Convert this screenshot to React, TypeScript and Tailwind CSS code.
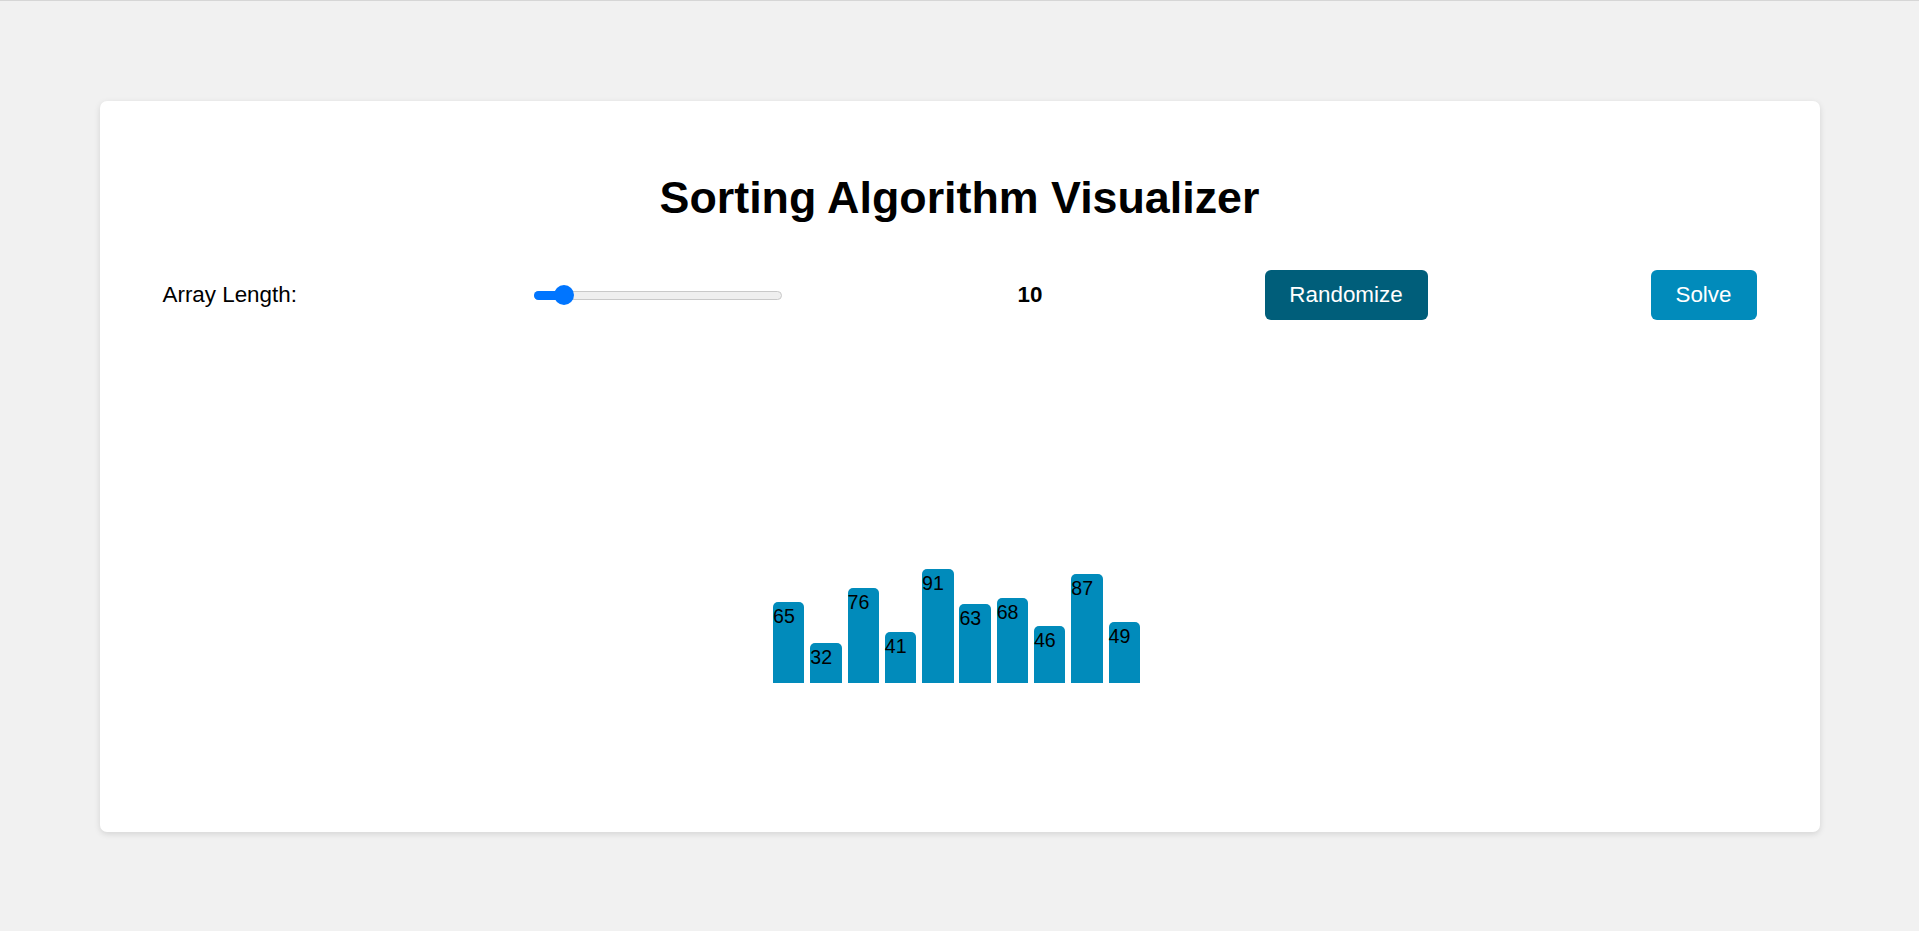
import React from "react";

const values = [65, 32, 76, 41, 91, 63, 68, 46, 87, 49];

export default function App() {
  return (
    <div
      className="min-h-[931px] w-full bg-[#f1f1f1] border-t border-[#d6d6d6] pt-[100px] text-black"
      style={{ fontFamily: '"Liberation Sans", Arial, sans-serif' }}
    >
      <div className="mx-auto w-[1720px] h-[731px] bg-white rounded-[7px] shadow-[0_2px_6px_rgba(0,0,0,0.12)] px-[63px] pt-[71px] flex flex-col">
        <h1 className="text-center text-[44.8px] leading-[50px] font-bold">
          Sorting Algorithm Visualizer
        </h1>
        <div className="mt-[48px] h-[50px] flex items-center text-[22.4px]">
          <span className="leading-[26px] w-[134px] whitespace-nowrap">Array Length:</span>
          <div className="relative ml-[237px] w-[248px] h-[9px] rounded-full bg-[#efefef] border border-[#c9c9c9]">
            <div className="absolute left-[-1px] top-[-1px] h-[9px] w-[32px] rounded-full bg-[#0075ff]" />
            <div className="absolute left-[19px] top-[-6.5px] w-[20px] h-[20px] rounded-full bg-[#0075ff]" />
          </div>
          <span className="ml-[236px] font-bold leading-[26px] w-[24px] text-center">10</span>
          <button className="ml-[223px] w-[163px] h-[50px] rounded-[6px] bg-[#005e7a] text-white leading-[26px]">
            Randomize
          </button>
          <button className="ml-[223px] w-[106px] h-[50px] rounded-[6px] bg-[#018bbb] text-white leading-[26px]">
            Solve
          </button>
        </div>
        <div className="h-[363px] flex items-end justify-center pr-[6px]">
          {values.map((v, i) => (
            <div
              key={i}
              className="w-[31.5px] mx-[2.9px] bg-[#018bbb] rounded-t-[5px] pt-[3px] text-[19.6px] leading-[22px] text-black"
              style={{ height: `${v * 1.25}px` }}
            >
              {v}
            </div>
          ))}
        </div>
      </div>
    </div>
  );
}
